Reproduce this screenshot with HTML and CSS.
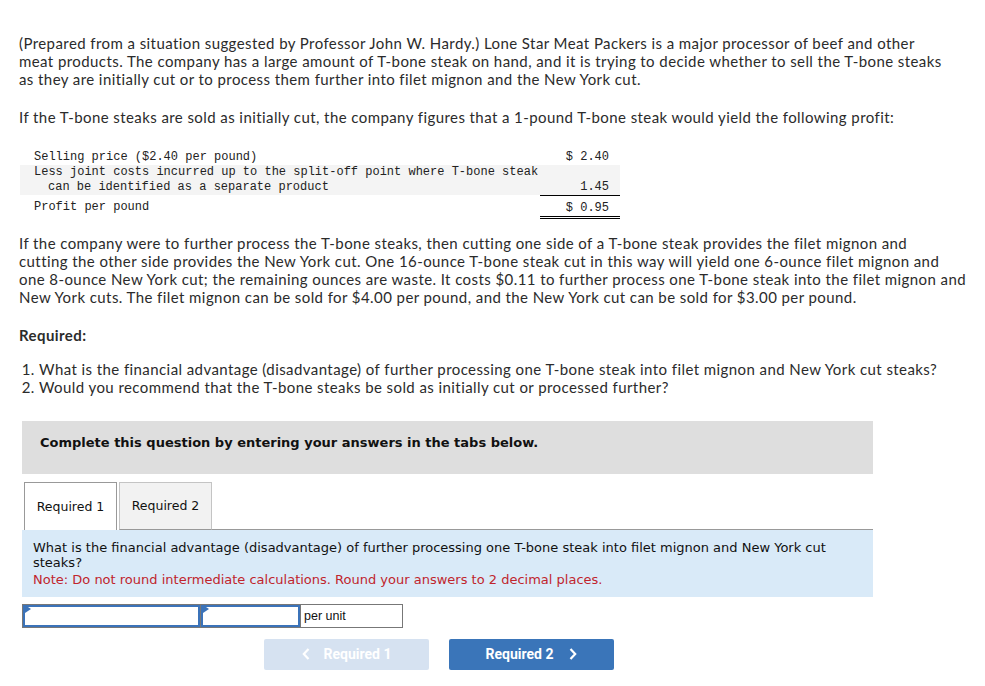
FILE: index.html
```html
<!DOCTYPE html>
<html>
<head>
<meta charset="utf-8">
<link rel="stylesheet" href="styles.css">
</head>
<body>
<div class="page">
  <p class="para p1">(Prepared from a situation suggested by Professor John W. Hardy.) Lone Star Meat Packers is a major processor of beef and other<br>meat products. The company has a large amount of T-bone steak on hand, and it is trying to decide whether to sell the T-bone steaks<br>as they are initially cut or to process them further into filet mignon and the New York cut.</p>
  <p class="para p2">If the T-bone steaks are sold as initially cut, the company figures that a 1-pound T-bone steak would yield the following profit:</p>

  <table class="fin">
    <tr>
      <td class="lbl">Selling price ($2.40 per pound)</td>
      <td class="val">$ 2.40</td>
    </tr>
    <tr class="shade">
      <td class="lbl">Less joint costs incurred up to the split-off point where T-bone steak<br><span class="ind">can be identified as a separate product</span></td>
      <td class="val under">1.45</td>
    </tr>
    <tr class="last">
      <td class="lbl">Profit per pound</td>
      <td class="val dbl">$ 0.95</td>
    </tr>
  </table>

  <p class="para p3">If the company were to further process the T-bone steaks, then cutting one side of a T-bone steak provides the filet mignon and<br>cutting the other side provides the New York cut. One 16-ounce T-bone steak cut in this way will yield one 6-ounce filet mignon and<br>one 8-ounce New York cut; the remaining ounces are waste. It costs $0.11 to further process one T-bone steak into the filet mignon and<br>New York cuts. The filet mignon can be sold for $4.00 per pound, and the New York cut can be sold for $3.00 per pound.</p>

  <p class="para req">Required:</p>
  <ol class="reqlist">
    <li>What is the financial advantage (disadvantage) of further processing one T-bone steak into filet mignon and New York cut steaks?</li>
    <li>Would you recommend that the T-bone steaks be sold as initially cut or processed further?</li>
  </ol>

  <div class="work">
    <div class="banner">Complete this question by entering your answers in the tabs below.</div>
    <div class="tabs">
      <div class="tab active">Required 1</div>
      <div class="tab">Required 2</div>
      <div class="tabrule"></div>
    </div>
    <div class="qbox">
      <div class="qtext">What is the financial advantage (disadvantage) of further processing one T-bone steak into filet mignon and New York cut steaks?</div>
      <div class="note">Note: Do not round intermediate calculations. Round your answers to 2 decimal places.</div>
    </div>
    <div class="answer">
      <div class="cell wide"><div class="field"><span class="flag"></span></div></div>
      <div class="cell mid"><div class="field"><span class="flag"></span></div></div>
      <div class="cell unit">per unit</div>
    </div>
    <div class="nav">
      <button class="btn prev"><svg width="8" height="12" viewBox="0 0 8 12"><path d="M6.5 1 L1.8 6 L6.5 11" fill="none" stroke="#fff" stroke-width="2.2"/></svg><span>Required 1</span></button>
      <button class="btn next"><span>Required 2</span><svg width="8" height="12" viewBox="0 0 8 12"><path d="M1.5 1 L6.2 6 L1.5 11" fill="none" stroke="#fff" stroke-width="2.2"/></svg></button>
    </div>
  </div>
</div>
</body>
</html>
```

FILE: styles.css
```css
* { box-sizing: border-box; }
body {
  margin: 0;
  background: #fff;
  color: #2b2b2b;
}
.page {
  padding: 34px 0 0 19px;
  width: 985px;
}
.para {
  margin: 0;
  font-family: Lato, "Open Sans", sans-serif;
  font-size: 15px;
  line-height: 18px;
  letter-spacing: 0.42px;
  white-space: nowrap;
}
.p2 { margin-top: 20px; }
.fin {
  margin-top: 24px;
  margin-left: 1px;
  width: 600px;
  border-collapse: collapse;
  font-family: "Liberation Mono", "DejaVu Sans Mono", monospace;
  font-size: 12px;
  line-height: 15px;
  color: #222;
}
.fin td { padding: 0; vertical-align: bottom; }
.fin .lbl { padding-left: 14px; }
.fin .val {
  width: 80px;
  text-align: right;
  padding-right: 11px;
}
.fin .ind { padding-left: 14px; }
.fin .shade td { background: #f4f4f4; }
.fin .under { border-bottom: 1px solid #000; }
.fin .last td { padding-top: 5px; }
.fin .last .lbl { vertical-align: top; }
.fin .dbl { border-bottom: 3px double #000; }
.p3 { margin-top: 15px; }
.req {
  margin-top: 20px;
  font-weight: bold;
}
.reqlist {
  margin: 16px 0 0 0;
  padding-left: 20px;
  font-family: Lato, "Open Sans", sans-serif;
  font-size: 15px;
  line-height: 18px;
  letter-spacing: 0.42px;
  white-space: nowrap;
}
.work {
  margin-top: 25px;
  margin-left: 3px;
  width: 851px;
  font-family: "DejaVu Sans", Verdana, sans-serif;
  font-size: 13px;
  color: #111;
}
.banner {
  background: #dedede;
  height: 53px;
  padding: 14px 0 0 18px;
  font-weight: bold;
  font-size: 13px;
  line-height: 16px;
}
.tabs {
  display: flex;
  align-items: flex-end;
  margin-top: 8px;
  height: 48px;
}
.tab {
  width: 93px;
  height: 48px;
  margin-left: 2px;
  border: 1px solid #c4c4c4;
  border-bottom: none;
  background: #f2f2f2;
  display: flex;
  align-items: center;
  justify-content: center;
  font-size: 12.5px;
  color: #111;
}
.tab.active {
  background: #fff;
  border-color: #999;
  border-bottom: none;
}
.tab + .tab { margin-left: 2px; border-bottom: 1px solid #999; }
.tabrule {
  flex: 1;
  border-bottom: 1px solid #999;
}
.qbox {
  background: #d9eaf8;
  height: 67px;
  padding: 10px 11px 0 11px;
  line-height: 15px;
  font-size: 13px;
}
.note {
  color: #c0252d;
  margin-top: 2px;
}
.answer {
  display: flex;
  margin-top: 7px;
  height: 24px;
}
.cell {
  border: 1px solid #777;
  height: 24px;
  background: #fff;
}
.cell + .cell { border-left: none; }
.wide { width: 179px; }
.mid { width: 100px; }
.unit {
  width: 102px;
  font-family: "Liberation Sans", Arial, sans-serif;
  font-size: 12.5px;
  line-height: 22px;
  padding-left: 3px;
  color: #111;
}
.field {
  position: relative;
  height: 22px;
  border: 2px solid #3b73b9;
}
.flag {
  position: absolute;
  left: 0;
  top: -2px;
  width: 0;
  height: 0;
  border-top: 4px solid transparent;
  border-bottom: 4px solid transparent;
  border-left: 6px solid #3b73b9;
}
.nav {
  display: flex;
  gap: 20px;
  margin-top: 11px;
  margin-left: 242px;
}
.btn {
  width: 165px;
  height: 31px;
  border: none;
  border-radius: 2px;
  display: flex;
  align-items: center;
  justify-content: center;
  gap: 14px;
  font-family: Roboto, "Liberation Sans", sans-serif;
  font-weight: bold;
  font-size: 14px;
  color: #fff;
  padding: 0;
}
.prev { background: #d6e2f1; }
.next { background: #3a75b9; gap: 16px; }
```
